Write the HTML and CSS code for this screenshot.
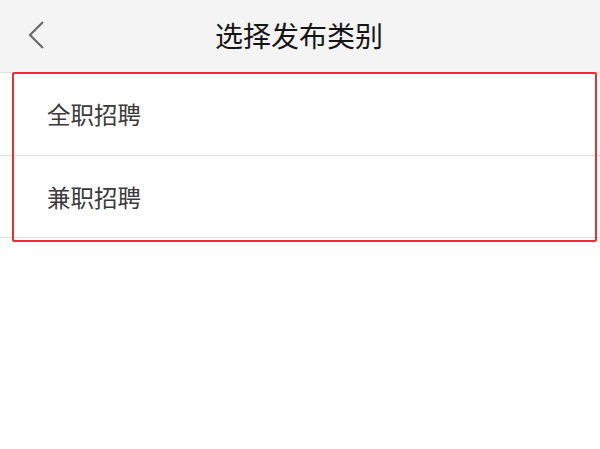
FILE: index.html
```html
<!DOCTYPE html>
<html lang="zh">
<head>
<meta charset="utf-8">
<link rel="stylesheet" href="styles.css">
</head>
<body>
<div class="page">
  <header class="topbar">
    <span class="back">
      <svg width="18" height="28" viewBox="0 0 18 28"><path d="M16 1 L3 14 L16 27" fill="none" stroke="#6a6a6a" stroke-width="2.2"/></svg>
    </span>
    <h1 class="title">选择发布类别</h1>
  </header>
  <ul class="list">
    <li class="item">全职招聘</li>
    <li class="item">兼职招聘</li>
  </ul>
  <div class="highlight"></div>
</div>
</body>
</html>
```
FILE: styles.css
```css
* { box-sizing: border-box; }
html, body { margin: 0; padding: 0; background: #fff; }
body { font-family: "Noto Sans CJK SC", "Noto Sans", sans-serif; }
.page { position: relative; width: 600px; height: 449px; background: #fff; }
.topbar {
  height: 73px;
  background: #f4f4f4;
  border-bottom: 1px solid #e2e2e2;
  display: flex;
  align-items: center;
  justify-content: center;
  position: relative;
}
.back { position: absolute; left: 27px; top: 21px; width: 18px; height: 28px; display: flex; }
.title { margin: 0 0 0 -2px; font-size: 28px; font-weight: 400; color: #161616; line-height: 1; padding-bottom: 2px; }
.list { list-style: none; margin: 0; padding: 0; }
.item {
  height: 83px;
  display: flex;
  align-items: center;
  padding-left: 47px;
  font-size: 23.5px;
  color: #3a3a3a;
  border-bottom: 1px solid #dedede;
  background: #fff;
}
.item + .item { height: 82px; }
.highlight {
  position: absolute;
  left: 12px;
  top: 72px;
  width: 585px;
  height: 170px;
  border: 2px solid #e8302e;
  border-radius: 2px;
}
```
